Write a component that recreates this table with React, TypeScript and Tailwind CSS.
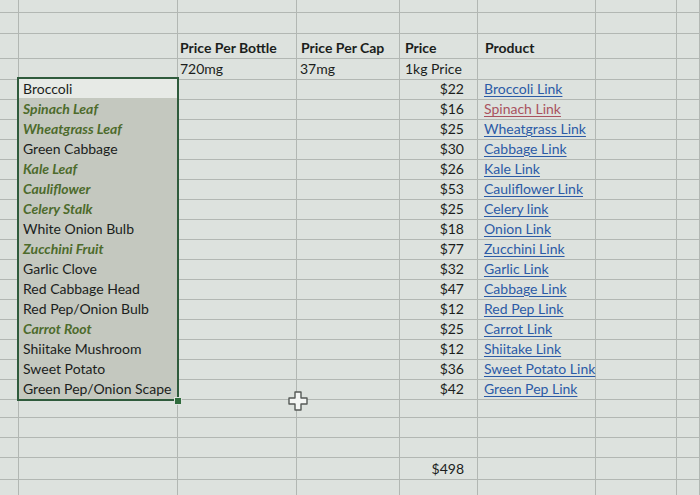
const cols = "grid-cols-[19px_159px_119px_103px_78px_118px_81px_1fr]";

type Veg = { name: string; green?: boolean; price: string; link: string; visited?: boolean };

const veggies: Veg[] = [
  { name: "Broccoli", price: "$22", link: "Broccoli Link" },
  { name: "Spinach Leaf", green: true, price: "$16", link: "Spinach Link", visited: true },
  { name: "Wheatgrass Leaf", green: true, price: "$25", link: "Wheatgrass Link" },
  { name: "Green Cabbage", price: "$30", link: "Cabbage Link" },
  { name: "Kale Leaf", green: true, price: "$26", link: "Kale Link" },
  { name: "Cauliflower", green: true, price: "$53", link: "Cauliflower Link" },
  { name: "Celery Stalk", green: true, price: "$25", link: "Celery link" },
  { name: "White Onion Bulb", price: "$18", link: "Onion Link" },
  { name: "Zucchini Fruit", green: true, price: "$77", link: "Zucchini Link" },
  { name: "Garlic Clove", price: "$32", link: "Garlic Link" },
  { name: "Red Cabbage Head", price: "$47", link: "Cabbage Link" },
  { name: "Red Pep/Onion Bulb", price: "$12", link: "Red Pep Link" },
  { name: "Carrot Root", green: true, price: "$25", link: "Carrot Link" },
  { name: "Shiitake Mushroom", price: "$12", link: "Shiitake Link" },
  { name: "Sweet Potato", price: "$36", link: "Sweet Potato Link" },
  { name: "Green Pep/Onion Scape", price: "$42", link: "Green Pep Link" },
];

const cell = "border-r border-b border-[#b2b7b3] overflow-visible whitespace-nowrap flex items-center";

const EmptyRow = ({ h }: { h: string }) => (
  <div className={`grid ${cols} ${h}`}>
    {Array.from({ length: 8 }).map((_, i) => (
      <div key={i} className={cell} />
    ))}
  </div>
);

const PlusCursor = () => (
  <svg width="22" height="22" viewBox="0 0 22 22" className="absolute left-[287px] top-[390px]">
    <path
      d="M8 2h6v6h6v6h-6v6H8v-6H2V8h6z"
      fill="#f4f6f4"
      stroke="#555a57"
      strokeWidth="1.4"
      strokeLinejoin="round"
    />
  </svg>
);

export default function App() {
  return (
    <div
      className="relative w-[700px] h-[495px] overflow-hidden bg-[#dde2de] text-[14px] text-[#1b1e1c]"
      style={{ fontFamily: "Lato, 'Open Sans', sans-serif" }}
    >
      <EmptyRow h="h-[13px]" />
      <EmptyRow h="h-[21px]" />
      <div className={`grid ${cols} h-[24px] font-bold`}>
        <div className={cell} />
        <div className={cell} />
        <div className={`${cell} pl-[2px] pt-[3px]`}>Price Per Bottle</div>
        <div className={`${cell} pl-[4px] pt-[3px]`}>Price Per Cap</div>
        <div className={`${cell} pl-[5px] pt-[3px]`}>Price</div>
        <div className={`${cell} pl-[7px] pt-[3px]`}>Product</div>
        <div className={cell} />
        <div className={cell} />
      </div>
      <div className={`grid ${cols} h-[20px]`}>
        <div className={cell} />
        <div className={cell} />
        <div className={`${cell} pl-[2px]`}>720mg</div>
        <div className={`${cell} pl-[3px]`}>37mg</div>
        <div className={`${cell} pl-[5px]`}>1kg Price</div>
        <div className={cell} />
        <div className={cell} />
        <div className={cell} />
      </div>
      {veggies.map((v, i) => (
        <div key={v.name + i} className={`grid ${cols} h-[20px]`}>
          <div className={cell} />
          <div
            className={`${cell} pl-[4px] border-[#aeb3ab] ${i === 0 ? "bg-[#e7eae6]" : "bg-[#c4c8bf]"} ${
              v.green ? "italic font-bold text-[#4d6b2c]" : ""
            }`}
          >
            {v.name}
          </div>
          <div className={cell} />
          <div className={cell} />
          <div className={`${cell} justify-end pr-[13px]`}>{v.price}</div>
          <div className={`${cell} pl-[6px]`}>
            <span
              className={`underline underline-offset-2 ${v.visited ? "text-[#a9535f] decoration-[#a9535f]" : "text-[#2c5ba6] decoration-[#2c5ba6]"}`}
            >
              {v.link}
            </span>
          </div>
          <div className={cell} />
          <div className={cell} />
        </div>
      ))}
      <EmptyRow h="h-[20px]" />
      <EmptyRow h="h-[20px]" />
      <EmptyRow h="h-[20px]" />
      <div className={`grid ${cols} h-[20px]`}>
        <div className={cell} />
        <div className={cell} />
        <div className={cell} />
        <div className={cell} />
        <div className={`${cell} justify-end pr-[13px]`}>$498</div>
        <div className={cell} />
        <div className={cell} />
        <div className={cell} />
      </div>
      <EmptyRow h="h-[20px]" />

      {/* selection outline + fill handle */}
      <div className="absolute left-[17px] top-[77px] w-[162px] h-[324px] border-2 border-[#2f5b3c] pointer-events-none" />
      <div className="absolute left-[174px] top-[397px] w-[8px] h-[8px] bg-[#2f6b3c] border border-[#dde2de]" />
      <PlusCursor />
    </div>
  );
}
